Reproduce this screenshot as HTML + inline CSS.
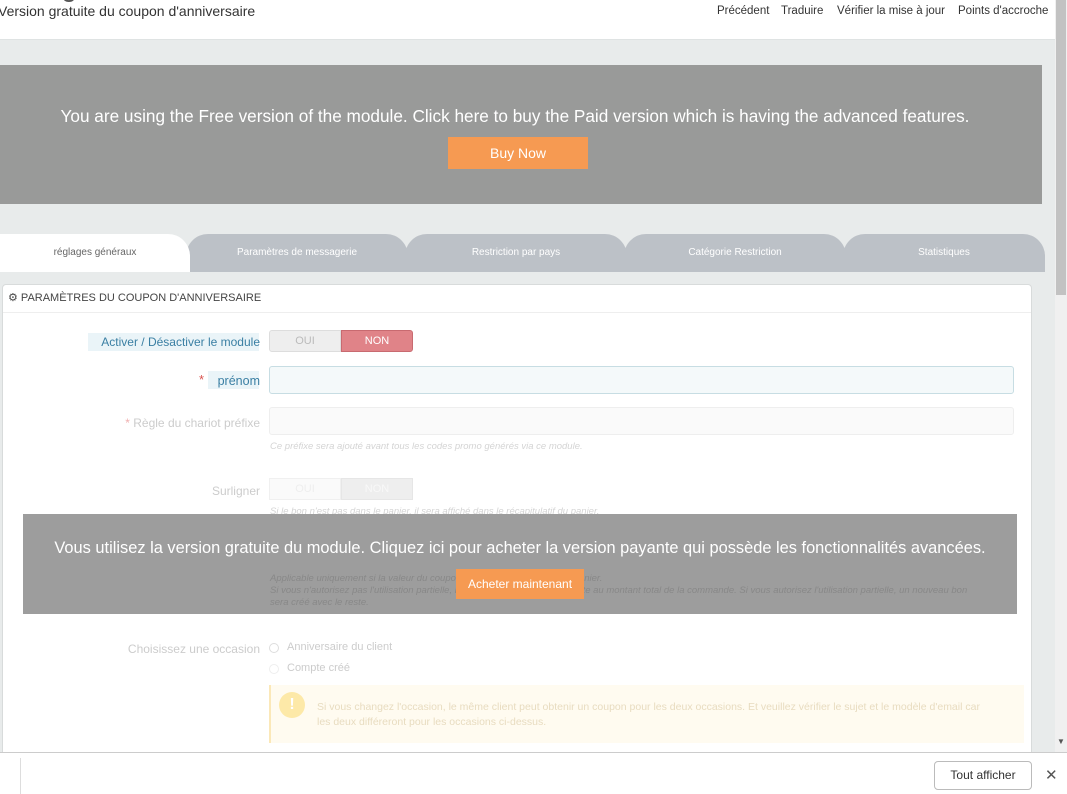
<!DOCTYPE html>
<html><head><meta charset="utf-8"><style>
*{margin:0;padding:0;box-sizing:border-box}
body{width:1067px;height:794px;overflow:hidden;position:relative;background:#e8ebeb;font-family:"Liberation Sans",sans-serif;}
.abs{position:absolute}
.hdr{left:0;top:0;width:1055px;height:40px;background:#fff;border-bottom:1px solid #dfe3e3}
.title{left:-4px;top:-29px;font-size:28px;color:#555;white-space:nowrap}
.sub{left:-2px;top:3px;font-size:14px;color:#333}
.nav{top:5px;font-size:11.5px;color:#333}
.banner{left:0;top:65px;width:1042px;height:139px;background:#999a99}
.btxt{left:0;width:1030px;top:106px;text-align:center;color:#fff;font-size:17.2px}
.buy{left:448px;top:137px;width:140px;height:32px;background:#f69a52;color:#fff;font-size:14px;text-align:center;line-height:32px}
.tab{top:234px;height:38px;background:#bcc1c7;border-radius:22px 22px 0 0;color:#fff;font-size:10px;text-align:center;line-height:38px}
.panel{left:2px;top:284px;width:1030px;height:480px;background:#fff;border:1px solid #d8dbdb;border-radius:4px}
.lbl{font-size:12px;text-align:right;right:807px}
.help{font-size:9.5px;font-style:italic;color:#d4d4d4;left:270px}
.ov{left:23px;top:514px;width:994px;height:100px;background:rgba(150,150,150,0.93)}
</style></head><body>
<div class="abs hdr"></div>
<div class="abs title">Configurer</div>
<div class="abs sub">Version gratuite du coupon d'anniversaire</div>
<div class="abs nav" style="left:717px">Précédent</div>
<div class="abs nav" style="left:781px">Traduire</div>
<div class="abs nav" style="left:837px">Vérifier la mise à jour</div>
<div class="abs nav" style="left:958px">Points d'accroche</div>

<div class="abs banner"></div>
<div class="abs btxt">You are using the Free version of the module. Click here to buy the Paid version which is having the advanced features.</div>
<div class="abs buy">Buy Now</div>

<div class="abs tab" style="left:186px;width:222px">Paramètres de messagerie</div>
<div class="abs tab" style="left:405px;width:222px">Restriction par pays</div>
<div class="abs tab" style="left:624px;width:222px">Catégorie Restriction</div>
<div class="abs tab" style="left:843px;width:202px">Statistiques</div>
<div class="abs tab" style="left:0;width:190px;background:#fff;color:#666;border-radius:0 22px 0 0">réglages généraux</div>

<div class="abs panel"></div>
<div class="abs" style="left:3px;top:312px;width:1028px;border-top:1px solid #eee"></div>
<div class="abs" style="left:8px;top:291px;font-size:11px;color:#444">⚙ PARAMÈTRES DU COUPON D'ANNIVERSAIRE</div>

<div class="abs" style="left:88px;top:333px;width:171px;height:18px;background:#eaf4f8"></div>
<div class="abs lbl" style="top:335px;color:#3a7fa3">Activer / Désactiver le module</div>
<div class="abs" style="left:269px;top:330px;width:72px;height:22px;background:#eee;border:1px solid #ddd;border-radius:3px 0 0 3px;color:#bbb;font-size:11px;text-align:center;line-height:20px">OUI</div>
<div class="abs" style="left:341px;top:330px;width:72px;height:22px;background:#e08388;border:1px solid #c86a70;border-radius:0 3px 3px 0;color:#fff;font-size:11px;text-align:center;line-height:20px">NON</div>

<div class="abs" style="left:208px;top:371px;width:51px;height:18px;background:#eaf4f8"></div>
<div class="abs" style="left:199px;top:372px;font-size:13px;color:#d9534f">*</div>
<div class="abs lbl" style="top:374px;color:#3a7fa3;font-size:12.5px">prénom</div>
<div class="abs" style="left:269px;top:366px;width:745px;height:28px;background:#f4f9fa;border:1px solid #c7dde3;border-radius:3px"></div>

<div class="abs lbl" style="top:416px;color:#ccc"><span style="color:#f0b0b0">*</span> Règle du chariot préfixe</div>
<div class="abs" style="left:269px;top:407px;width:745px;height:28px;background:#fafafa;border:1px solid #eee;border-radius:3px"></div>
<div class="abs help" style="top:441px">Ce préfixe sera ajouté avant tous les codes promo générés via ce module.</div>

<div class="abs lbl" style="top:484px;color:#ccc">Surligner</div>
<div class="abs" style="left:269px;top:478px;width:72px;height:22px;background:#fafafa;border:1px solid #f0f0f0;color:#eee;font-size:11px;text-align:center;line-height:20px">OUI</div>
<div class="abs" style="left:341px;top:478px;width:72px;height:22px;background:#eee;border:1px solid #e6e6e6;color:#f8f8f8;font-size:11px;text-align:center;line-height:20px">NON</div>
<div class="abs help" style="top:506px">Si le bon n'est pas dans le panier, il sera affiché dans le récapitulatif du panier.</div>

<div class="abs ov"></div>
<div class="abs help" style="top:573px;color:#888;line-height:12px">Applicable uniquement si la valeur du coupon est supérieure au total du panier.<br>Si vous n'autorisez pas l'utilisation partielle, la valeur du coupon sera réduite au montant total de la commande. Si vous autorisez l'utilisation partielle, un nouveau bon<br>sera créé avec le reste.</div>
<div class="abs" style="left:23px;top:539px;width:994px;text-align:center;color:#fff;font-size:16.4px">Vous utilisez la version gratuite du module. Cliquez ici pour acheter la version payante qui possède les fonctionnalités avancées.</div>
<div class="abs" style="left:456px;top:569px;width:128px;height:30px;background:#f69a52;color:#fff;font-size:12px;text-align:center;line-height:30px">Acheter maintenant</div>

<div class="abs lbl" style="top:642px;color:#ccc">Choisissez une occasion</div>
<div class="abs" style="left:269px;top:643px;width:10px;height:10px;border:1px solid #ddd;border-radius:50%"></div>
<div class="abs" style="left:287px;top:641px;font-size:11px;color:#ccc">Anniversaire du client</div>
<div class="abs" style="left:269px;top:664px;width:10px;height:10px;border:1px solid #eee;border-radius:50%"></div>
<div class="abs" style="left:287px;top:662px;font-size:11px;color:#ccc">Compte créé</div>
<div class="abs" style="left:269px;top:685px;width:755px;height:58px;background:#fffbf0;border-left:2px solid #fbe8b8"></div>
<div class="abs" style="left:279px;top:692px;width:26px;height:26px;border-radius:50%;background:#fde9a8;color:#fff;font-weight:bold;text-align:center;line-height:26px">!</div>
<div class="abs" style="left:317px;top:700px;font-size:10.5px;color:#e8dcc0;line-height:15px">Si vous changez l'occasion, le même client peut obtenir un coupon pour les deux occasions. Et veuillez vérifier le sujet et le modèle d'email car<br>les deux différeront pour les occasions ci-dessus.</div>

<div class="abs" style="left:1055px;top:0;width:12px;height:752px;background:#f0f0f0"></div>
<div class="abs" style="left:1056px;top:0;width:10px;height:295px;background:#c2c2c2"></div>
<div class="abs" style="left:1057px;top:737px;font-size:8px;color:#555">▼</div>

<div class="abs" style="left:0;top:752px;width:1067px;height:42px;background:#fff;border-top:1px solid #ccc"></div>
<div class="abs" style="left:20px;top:758px;height:36px;border-left:1px solid #ddd"></div>
<div class="abs" style="left:934px;top:761px;width:98px;height:29px;border:1px solid #bbb;border-radius:4px;font-size:12px;color:#333;text-align:center;line-height:27px">Tout afficher</div>
<div class="abs" style="left:1045px;top:766px;font-size:15px;color:#555">✕</div>
</body></html>
